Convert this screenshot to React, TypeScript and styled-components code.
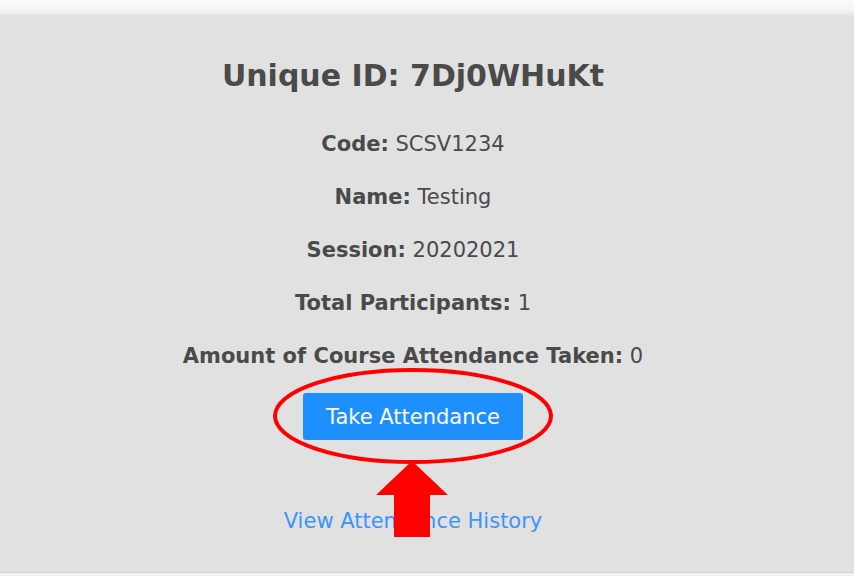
import styled, { createGlobalStyle } from 'styled-components';

const GlobalStyle = createGlobalStyle`
  html, body {
    margin: 0;
    padding: 0;
    background: #fafafa;
    font-family: "DejaVu Sans", Verdana, sans-serif;
  }
`;

const Page = styled.div`
  width: 854px;
  height: 576px;
  display: flex;
  flex-direction: column;
  overflow: hidden;
`;

const TopFade = styled.div`
  height: 15px;
  flex-shrink: 0;
  background: linear-gradient(#fbfbfb, #f5f5f5 60%, #e9e9e9);
`;

const Card = styled.div`
  position: relative;
  flex: 1;
  background: #e1e1e1;
  border-bottom: 3px solid #f2f2f2;
  box-shadow: inset 0 -1px 0 #cfcfcf;
  display: flex;
  flex-direction: column;
  align-items: center;
  padding: 43px 28px 0 0;
  box-sizing: border-box;
  color: #4a4a4a;
`;

const Title = styled.h2`
  margin: 0 0 38px;
  font-size: 30px;
  font-weight: bold;
  line-height: 36px;
`;

const InfoList = styled.div`
  display: flex;
  flex-direction: column;
  align-items: center;
  gap: 28px;
`;

const InfoRow = styled.div`
  font-size: 21px;
  line-height: 25px;
`;

const Label = styled.b`
  font-weight: bold;
`;

const PrimaryButton = styled.button`
  margin-top: 24px;
  width: 220px;
  height: 47px;
  border: none;
  border-radius: 3px;
  background: #1e8fff;
  color: #fff;
  font-family: inherit;
  font-size: 21px;
  cursor: pointer;
`;

const HistoryLink = styled.a`
  margin-top: 69px;
  font-size: 21px;
  line-height: 24px;
  color: #3a95ff;
  text-decoration: none;
`;

const Annotation = styled.svg`
  position: absolute;
  left: 0;
  top: -15px;
  pointer-events: none;
`;

const rows: [string, string][] = [
  ['Code:', 'SCSV1234'],
  ['Name:', 'Testing'],
  ['Session:', '20202021'],
  ['Total Participants:', '1'],
  ['Amount of Course Attendance Taken:', '0'],
];

export default function App() {
  return (
    <>
      <GlobalStyle />
      <Page>
        <TopFade />
        <Card>
          <Title>Unique ID: 7Dj0WHuKt</Title>
          <InfoList>
            {rows.map(([label, value]) => (
              <InfoRow key={label}>
                <Label>{label}</Label> {value}
              </InfoRow>
            ))}
          </InfoList>
          <PrimaryButton>Take Attendance</PrimaryButton>
          <HistoryLink href="#">View Attendance History</HistoryLink>
          <Annotation width="854" height="576" viewBox="0 0 854 576">
            <ellipse cx="413" cy="416" rx="138" ry="46" fill="none" stroke="#ff0000" strokeWidth="4" />
            <polygon points="412,461 448,495 430,495 430,537 394,537 394,495 376,495" fill="#ff0000" />
          </Annotation>
        </Card>
      </Page>
    </>
  );
}
